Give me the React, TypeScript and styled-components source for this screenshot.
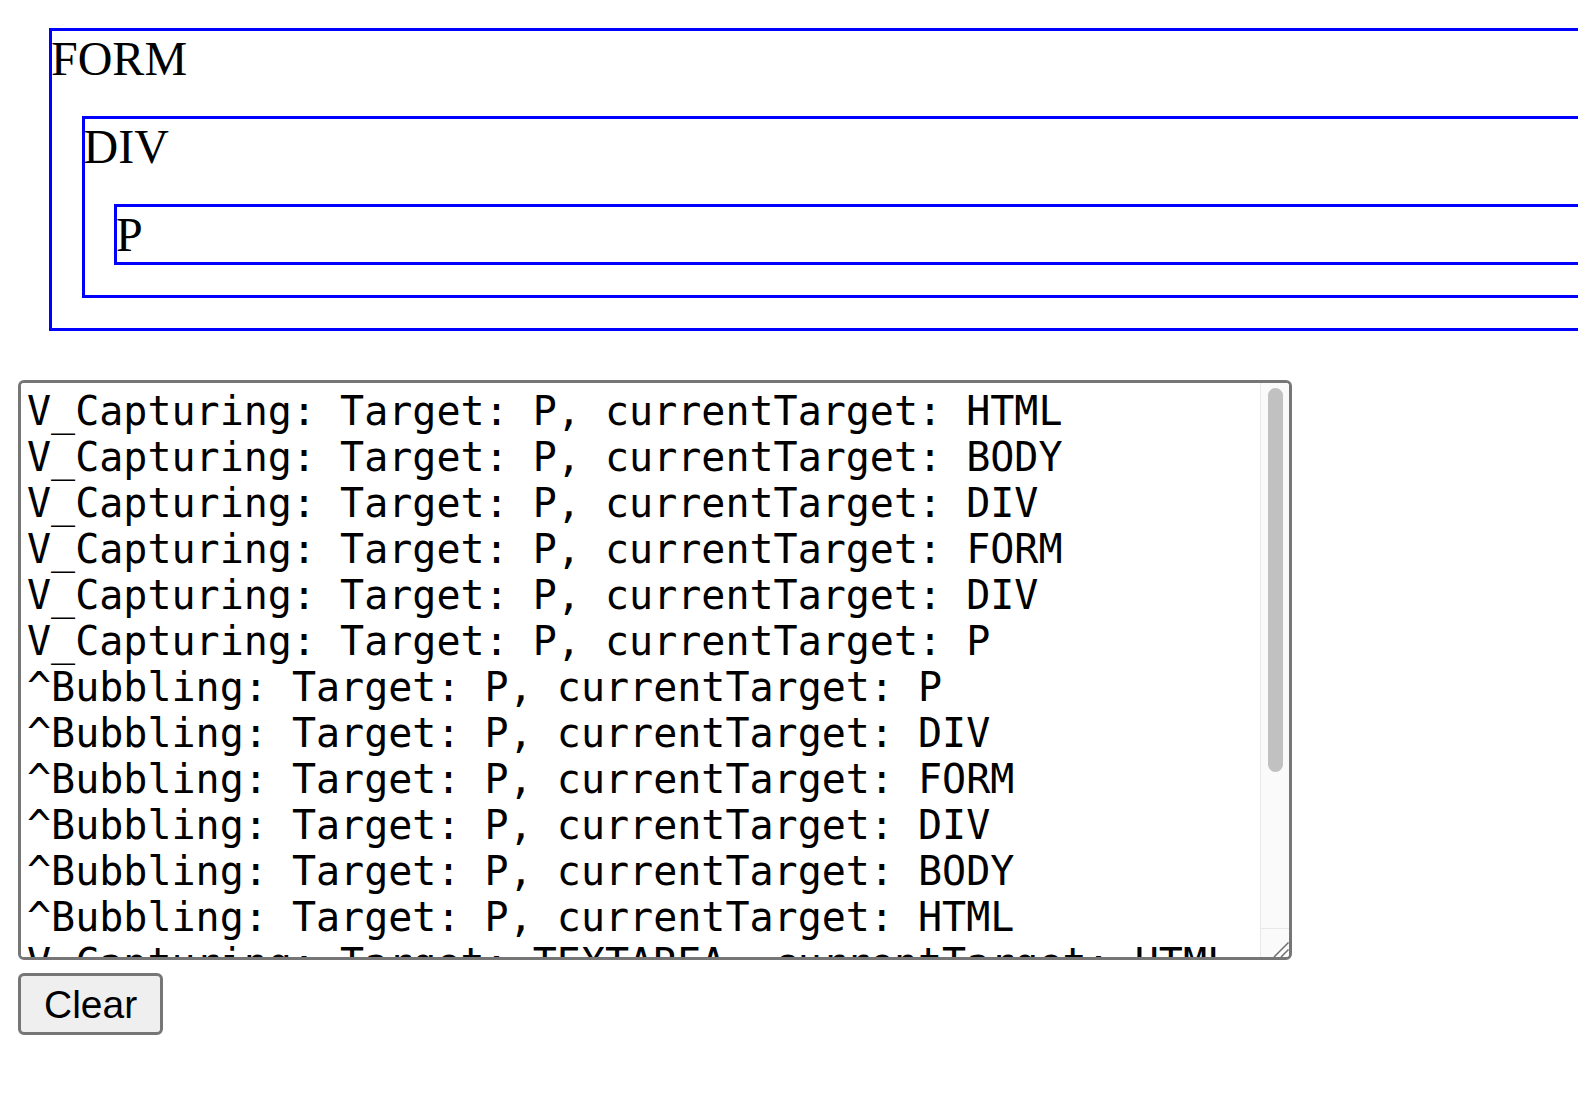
import React, { useState } from "react";
import styled, { createGlobalStyle } from "styled-components";

const GlobalStyle = createGlobalStyle`
  html, body {
    margin: 0;
    padding: 0;
    background: #ffffff;
    overflow: hidden;
  }
  body {
    font-family: "Liberation Serif", "Times New Roman", serif;
    color: #000000;
  }
`;

const Page = styled.div`
  padding: 28px 0 0 18px;
`;

const Frame = styled.div<{ $outer?: boolean; $leaf?: boolean }>`
  display: flex;
  flex-direction: column;
  gap: 30px;
  border: 3px solid #0000ff;
  margin: 0 ${(p) => (p.$outer ? "-400px" : "0")} 0 ${(p) => (p.$outer ? "31px" : "29.5px")};
  padding: 0 0 ${(p) => (p.$leaf ? "0" : "30px")} 0;
`;

const Label = styled.div`
  font-family: "Liberation Serif", "Times New Roman", serif;
  font-size: 48px;
  line-height: 55px;
  height: 55px;
  margin-left: -1px;
  color: #000000;
`;

const Controls = styled.div`
  display: flex;
  flex-direction: column;
  align-items: flex-start;
  gap: 13px;
  margin-top: 49px;
`;

const LogBox = styled.div`
  box-sizing: border-box;
  width: 1274px;
  height: 580px;
  border: 3px solid #767676;
  border-radius: 6px;
  background: #ffffff;
  display: grid;
  grid-template-columns: 1fr 29px;
  overflow: hidden;
`;

const LogText = styled.textarea`
  display: block;
  box-sizing: border-box;
  width: 100%;
  height: 100%;
  margin: 0;
  border: none;
  padding: 5px 6px;
  font-family: "DejaVu Sans Mono", "Liberation Mono", monospace;
  font-size: 40px;
  line-height: 46px;
  color: #000000;
  background: #ffffff;
  white-space: pre;
  overflow: hidden;
  resize: none;
  outline: none;
`;

const ScrollBar = styled.div`
  display: flex;
  flex-direction: column;
  background: #fafafa;
  border-left: 1px solid #e8e8e8;
`;

const Track = styled.div`
  flex: 1;
  padding: 5px 6px 0 7px;
`;

const Thumb = styled.div`
  width: 15px;
  height: 384px;
  border-radius: 8px;
  background: #c1c1c1;
`;

const Corner = styled.div`
  height: 29px;
  box-sizing: border-box;
  border-top: 1px solid #e8e8e8;
  display: flex;
  align-items: flex-end;
  justify-content: flex-end;
`;

const ClearButton = styled.button`
  box-sizing: border-box;
  height: 62px;
  padding: 0 23px;
  margin: 0;
  border: 3px solid #767676;
  border-radius: 6px;
  background: #efefef;
  color: #000000;
  font-family: "Liberation Sans", Arial, Helvetica, sans-serif;
  font-size: 39px;
  line-height: 45px;
  cursor: pointer;
`;

const initialLog = [
  "V_Capturing: Target: P, currentTarget: HTML",
  "V_Capturing: Target: P, currentTarget: BODY",
  "V_Capturing: Target: P, currentTarget: DIV",
  "V_Capturing: Target: P, currentTarget: FORM",
  "V_Capturing: Target: P, currentTarget: DIV",
  "V_Capturing: Target: P, currentTarget: P",
  "^Bubbling: Target: P, currentTarget: P",
  "^Bubbling: Target: P, currentTarget: DIV",
  "^Bubbling: Target: P, currentTarget: FORM",
  "^Bubbling: Target: P, currentTarget: DIV",
  "^Bubbling: Target: P, currentTarget: BODY",
  "^Bubbling: Target: P, currentTarget: HTML",
  "V_Capturing: Target: TEXTAREA, currentTarget: HTML",
  "V_Capturing: Target: TEXTAREA, currentTarget: BODY",
  "V_Capturing: Target: TEXTAREA, currentTarget: DIV",
  "^Bubbling: Target: TEXTAREA, currentTarget: DIV",
  "^Bubbling: Target: TEXTAREA, currentTarget: BODY",
  "^Bubbling: Target: TEXTAREA, currentTarget: HTML",
].join("\n");

function ResizeGrip() {
  return (
    <svg width="28" height="28" viewBox="0 0 28 28" aria-hidden="true">
      <line x1="13" y1="28" x2="27.5" y2="13.5" stroke="#6b6b6b" strokeWidth="1.5" />
      <line x1="20" y1="28" x2="27.5" y2="20.5" stroke="#6b6b6b" strokeWidth="1.5" />
    </svg>
  );
}

export default function App() {
  const [log, setLog] = useState(initialLog);

  return (
    <>
      <GlobalStyle />
      <Page>
        <Frame as="form" $outer onSubmit={(e: React.FormEvent) => e.preventDefault()}>
          <Label>FORM</Label>
          <Frame>
            <Label>DIV</Label>
            <Frame as="p" $leaf>
              <Label>P</Label>
            </Frame>
          </Frame>
        </Frame>
        <Controls>
          <LogBox>
            <LogText readOnly value={log} wrap="off" spellCheck={false} />
            <ScrollBar>
              <Track>
                <Thumb />
              </Track>
              <Corner>
                <ResizeGrip />
              </Corner>
            </ScrollBar>
          </LogBox>
          <ClearButton type="button" onClick={() => setLog("")}>
            Clear
          </ClearButton>
        </Controls>
      </Page>
    </>
  );
}
